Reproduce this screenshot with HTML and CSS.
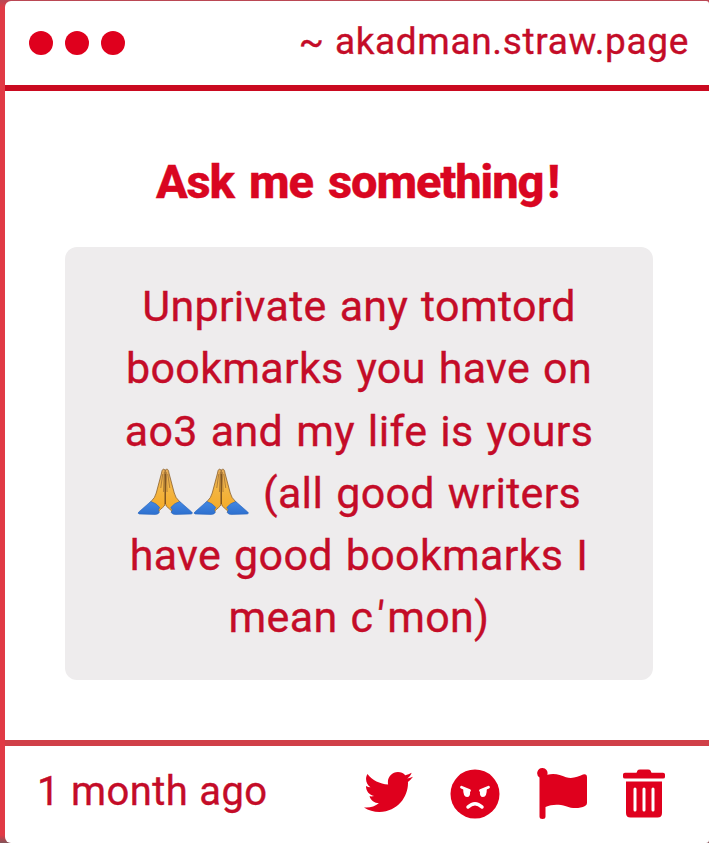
FILE: index.html
```html
<!DOCTYPE html>
<html lang="en">
<head>
<meta charset="utf-8">
<title>Ask me something!</title>
<link rel="stylesheet" href="styles.css">
</head>
<body>
<svg class="defs" aria-hidden="true">
  <defs>
    <linearGradient id="skin" x1="0" y1="0" x2="0" y2="1"><stop offset="0" stop-color="#e5ac5c"/><stop offset=".4" stop-color="#f3b646"/><stop offset="1" stop-color="#f5aa22"/></linearGradient>
    <linearGradient id="cuff" x1="0" y1="0" x2="0" y2="1"><stop offset="0" stop-color="#4488e2"/><stop offset="1" stop-color="#2d70cf"/></linearGradient>
    <symbol id="pray" viewBox="0 0 56 48">
      <g id="hand">
        <path d="M28 2C25.800.3 24.800 1.500 24.300 5L19 25Q18.500 29 12.500 35L21 45C22 41 25 40.500 27 38L28 35z" fill="url(#skin)" stroke="#8b602a" stroke-width=".8"/>
        <path d="M25.500 6L23.500 20M27 4L26.200 24" fill="none" stroke="#98682f" stroke-width=".7"/>
        <path d="M13.500 33.500Q19 35 22.500 39.500L21 42 22 44.500Q21 46.500 18 46.500L2 46Q0 45.500 1.500 44z" fill="url(#cuff)" stroke="#2865bd" stroke-width=".6"/>
      </g>
      <use href="#hand" transform="matrix(-1 0 0 1 56 0)"/>
      <path d="M28 6V36" stroke="#6d4318" stroke-width=".9"/>
    </symbol>
  </defs>
</svg>
<main class="card">
  <header class="bar">
    <div class="dots"><i></i><i></i><i></i></div>
    <span class="site">~ akadman.straw.page</span>
  </header>
  <section class="content">
    <h1>Ask me something<span class="bang">!</span></h1>
    <p class="message">Unprivate any tomtord<br>bookmarks you have on<br>ao3 and my life is yours<br><svg class="emoji" role="img" aria-label="🙏"><use href="#pray"/></svg><svg class="emoji" role="img" aria-label="🙏"><use href="#pray"/></svg> (all good writers<br>have good bookmarks I<br>mean c<span class="apos">'</span>mon)</p>
  </section>
  <footer class="foot">
    <span class="time">1 month ago</span>
    <div class="icons">
      <svg class="bird" viewBox="0 48 512 416"><path d="M459.370 151.716c.325 4.548.325 9.097.325 13.645 0 138.720-105.583 298.558-298.558 298.558-59.452 0-114.680-17.219-161.137-47.106 8.447.974 16.568 1.299 25.340 1.299 49.055 0 94.213-16.568 130.274-44.832-46.132-.975-84.792-31.188-98.112-72.772 6.498.974 12.995 1.624 19.818 1.624 9.421 0 18.843-1.300 27.614-3.573-48.081-9.747-84.143-51.980-84.143-102.985v-1.299c13.969 7.797 30.214 12.670 47.431 13.319-28.264-18.843-46.781-51.005-46.781-87.391 0-19.492 5.197-37.360 14.294-52.954 51.655 63.675 129.300 105.258 216.365 109.807-1.624-7.797-2.599-15.918-2.599-24.040 0-57.828 46.782-104.934 104.934-104.934 30.213 0 57.502 12.670 76.670 33.137 23.715-4.548 46.456-13.320 66.599-25.340-7.798 24.366-24.366 44.833-46.132 57.827 21.117-2.273 41.584-8.122 60.426-16.243-14.292 20.791-32.161 39.308-52.628 54.253z"/></svg>
      <svg class="angry" viewBox="0 0 50 50"><circle cx="25" cy="25" r="24.500"/><g class="cut"><path d="M11.500 18.200L19.500 21.500M38.500 18.200L30.500 21.500" stroke-width="2.800"/><path d="M18 38Q25 31.500 32 38" stroke-width="3.500"/></g><path class="hole" d="M13.200 19.500L20 22Q20.700 28 17 28 13 28 13.200 19.500zM36.800 19.500L30 22Q29.300 28 33 28 37 28 36.800 19.500z"/></svg>
      <svg class="flag" viewBox="0 0 50 51"><path d="M5.200 0A5.200 5.200 0 0 1 10.300 6.800C18 5 23 7 29 9.200 35 11 41 9 46 6.600Q50 5.500 50 9.500V35Q50 37 48 38C43 40.500 36 41 29 38.300 21 36 15 36.500 8.500 39V48.500Q8.500 51 5.500 51 2.500 51 2.500 48.500V9.500A5.200 5.200 0 0 1 5.200 0z"/></svg>
      <svg class="trash" viewBox="0 0 42 49"><path d="M2 3.700H13.500L14.500 1.500Q15 .5 17 .5H25Q27 .5 27.500 1.500L28.500 3.700H40Q42 3.700 42 5.500V8Q42 9.500 40 9.500H2Q0 9.500 0 8V5.500Q0 3.700 2 3.700zM3 12.500H39V44Q39 48.500 34.500 48.500H7.500Q3 48.500 3 44z"/><path class="slots" d="M12 20V41M21 20V41M30 20V41"/></svg>
    </div>
  </footer>
</main>
</body>
</html>
```
FILE: styles.css
```css
* { box-sizing: border-box; }
body {
  margin: 0;
  height: 843px;
  padding: 1px 0 0 5px;
  overflow: hidden;
  background: linear-gradient(#b84855, #e13a45 8px, #e13a45 835px, #80545a);
  font-family: Roboto, "Liberation Sans", sans-serif;
  color: #c40c28;
  -webkit-text-stroke: .35px currentColor;
}
.defs { display: block; width: 0; height: 0; overflow: hidden; }
.card {
  height: 842px;
  display: flex;
  flex-direction: column;
  background: #fff;
  border-radius: 6px 3px 3px 6px;
  overflow: hidden;
  white-space: nowrap;
}
.bar {
  height: 90px;
  flex: none;
  display: flex;
  align-items: center;
  justify-content: space-between;
  padding: 0 20px 0 24px;
  border-bottom: 6px solid #ca0a20;
}
.dots { display: flex; gap: 12px; }
.dots i { width: 24px; height: 24px; border-radius: 50%; background: #df001d; }
.site { font-size: 37px; line-height: 44px; letter-spacing: .65px; word-spacing: .5px; margin-top: -3px; }
.content { flex: 1; padding: 61px 56px 0 60px; text-align: center; }
h1 {
  margin: 0 3px 35px 0;
  color: #d90621;
  font-size: 47px;
  line-height: 60px;
  font-weight: 800;
  letter-spacing: -1.1px;
  word-spacing: 4.5px;
}
.bang { margin-left: 4px; }
.message {
  margin: 0;
  height: 433px;
  padding: 28px 0 0;
  border-radius: 12px;
  background: #eeeced;
  font-size: 43px;
  line-height: 62.3px;
  letter-spacing: .32px;
  word-spacing: 2px;
}
.apos { margin: 0 3px; display: inline-block; transform: skewX(-6deg); line-height: 1; }
.emoji { width: 56.5px; height: 48px; vertical-align: -8px; }
.foot {
  height: 103px;
  flex: none;
  display: flex;
  justify-content: space-between;
  padding: 0 44px 0 32px;
  border-top: 6px solid #d04048;
}
.time { font-size: 40px; line-height: 47px; letter-spacing: .4px; word-spacing: .8px; margin-top: 22px; }
.icons { display: flex; align-items: flex-start; fill: #df001d; }
.bird { width: 49px; height: 42px; margin: 25px 37px 0 0; }
.angry { width: 50px; height: 50px; margin: 23px 37px 0 0; }
.flag { width: 50px; height: 51px; margin: 22px 36px 0 0; }
.trash { width: 42px; height: 49px; margin-top: 23px; }
.cut, .slots { fill: none; stroke: #fff; stroke-linecap: round; }
.slots { stroke-width: 3; }
.hole { fill: #fff; }
```
